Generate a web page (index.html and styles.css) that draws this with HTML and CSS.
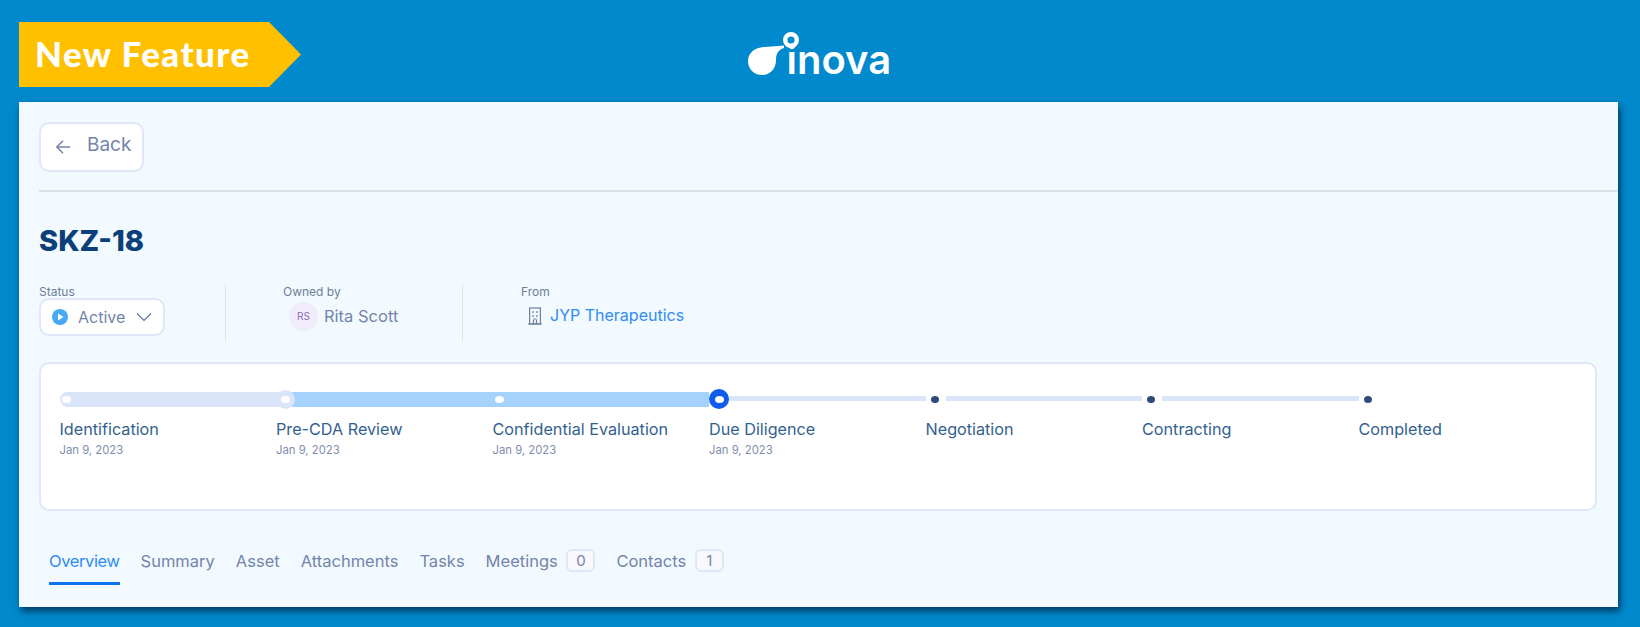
FILE: index.html
```html
<!DOCTYPE html>
<html lang="en">
<head>
    <meta charset="UTF-8">
    <title>New Feature - SKZ-18</title>
    <link rel="stylesheet" href="styles.css">
</head>
<body>
    <!-- Banner -->
    <div class="top">
        <div class="ribbon">New Feature</div>
        <div class="logo">
            <span class="logo-word">inova</span>
            <svg class="logo-mark" viewBox="0 0 55 48" width="55" height="48">
                <path d="M39 15.5 L20 17 C10 17 3 23 3 31 C3 39 9 45 17 45 C26 45 31 38 31 30 C31 24 33 20 39 18 Z" fill="#fff"/>
                <circle cx="46" cy="10" r="5.8" fill="#0089cc" stroke="#fff" stroke-width="4.4"/>
            </svg>
        </div>
    </div>

    <div class="panel">
        <!-- Back -->
        <div class="topbar">
            <button class="back">
                <svg viewBox="0 0 18 18" width="16" height="16" fill="none" stroke="#7385ab" stroke-width="1.7">
                    <path d="M17 9H2M9 2L2 9l7 7"/>
                </svg>
                <span>Back</span>
            </button>
        </div>

        <h1 class="title">SKZ-18</h1>

        <!-- Status, owner, company -->
        <div class="meta">
            <div class="meta-item status">
                <div class="meta-label">Status</div>
                <div class="select">
                    <svg viewBox="0 0 16 16" width="16" height="16">
                        <circle cx="8" cy="8" r="8" fill="#45a9f5"/>
                        <path d="M6 4.5v7l5.5-3.5z" fill="#fff"/>
                    </svg>
                    <span>Active</span>
                    <svg class="chevron" viewBox="0 0 16 10" width="16" height="10" fill="none" stroke="#5d6f96" stroke-width="1.1">
                        <path d="M1 1.5l7 7 7-7"/>
                    </svg>
                </div>
            </div>
            <div class="meta-item owner">
                <div class="meta-label">Owned by</div>
                <div class="meta-value">
                    <span class="avatar">RS</span>
                    <span>Rita Scott</span>
                </div>
            </div>
            <div class="meta-item from">
                <div class="meta-label">From</div>
                <div class="meta-value company">
                    <svg viewBox="0 0 14 18" width="14" height="18" fill="none" stroke="#6d7f9f" stroke-width="1.2">
                        <rect x="1.6" y="1" width="10.8" height="16"/>
                        <path d="M5 4v2M9 4v2M5 8v2M9 8v2M5 12h4M0 17h14"/>
                        <path d="M5.5 13v4M8.5 13v4"/>
                    </svg>
                    <a class="link">JYP Therapeutics</a>
                </div>
            </div>
        </div>

        <!-- Stage progress -->
        <div class="card">
            <div class="step">
                <div class="track passed first"><i class="dot"></i></div>
                <div class="step-name">Identification</div>
                <div class="step-date">Jan 9, 2023</div>
            </div>
            <div class="step">
                <div class="track done joined"><i class="halo"><i class="dot"></i></i></div>
                <div class="step-name">Pre-CDA Review</div>
                <div class="step-date">Jan 9, 2023</div>
            </div>
            <div class="step">
                <div class="track done inset"><i class="dot"></i></div>
                <div class="step-name">Confidential Evaluation</div>
                <div class="step-date">Jan 9, 2023</div>
            </div>
            <div class="step">
                <div class="track"><i class="current"><i class="dot"></i></i><b class="line"></b></div>
                <div class="step-name">Due Diligence</div>
                <div class="step-date">Jan 9, 2023</div>
            </div>
            <div class="step">
                <div class="track"><i class="todo"></i><b class="line"></b></div>
                <div class="step-name">Negotiation</div>
            </div>
            <div class="step">
                <div class="track"><i class="todo"></i><b class="line"></b></div>
                <div class="step-name">Contracting</div>
            </div>
            <div class="step">
                <div class="track"><i class="todo"></i></div>
                <div class="step-name">Completed</div>
            </div>
        </div>

        <!-- Tabs -->
        <div class="tabs">
            <div class="tab active">Overview</div>
            <div class="tab">Summary</div>
            <div class="tab">Asset</div>
            <div class="tab">Attachments</div>
            <div class="tab">Tasks</div>
            <div class="tab">Meetings <span class="count">0</span></div>
            <div class="tab">Contacts <span class="count">1</span></div>
        </div>
    </div>
</body>
</html>
```

FILE: styles.css
```css
/* Global Styles */
body {
    margin: 0;
    height: 627px;
    overflow: hidden;
    background: #0089cc;
    font-family: 'Inter', sans-serif;
    color: #33618f;
}

/* Banner */
.top {
    height: 102px;
    display: grid;
    grid-template-columns: 1fr auto 1fr;
    position: relative;
}

.ribbon {
    margin: 22px 0 0 19px;
    width: 282px;
    height: 65px;
    box-sizing: border-box;
    padding-left: 16px;
    background: #ffc000;
    clip-path: polygon(0 0, 250px 0, 100% 50%, 250px 100%, 0 100%);
    color: #fff;
    font-family: 'Lato', sans-serif;
    font-weight: 900;
    font-size: 35px;
    letter-spacing: 1.4px;
    line-height: 63px;
    white-space: nowrap;
}

.logo {
    position: relative;
    width: 143px;
    height: 102px;
    margin-left: 2px;
}

.logo-word {
    position: absolute;
    left: 37px;
    top: 36px;
    font-size: 40px;
    line-height: 48px;
    font-weight: 600;
    color: #fff;
}

.logo-mark {
    position: absolute;
    left: -4.5px;
    top: 30px;
}

/* Panel */
.panel {
    width: 1599px;
    height: 505px;
    margin-left: 19px;
    box-sizing: border-box;
    background: #f2f9ff;
    box-shadow: 2px 4px 7px rgba(0, 30, 60, 0.75);
}

.topbar {
    margin-left: 20px;
    padding: 20px 0 18px;
    border-bottom: 2px solid #dce2ea;
}

.back {
    width: 105px;
    height: 50px;
    display: flex;
    align-items: center;
    gap: 16px;
    padding: 0 0 5px 14px;
    background: #fff;
    border: 2px solid #dfe7f8;
    border-radius: 10px;
    color: #7385ab;
    font-family: inherit;
    font-size: 19px;
}

.back svg {
    margin-top: 5px;
}

.title {
    margin: 32px 0 0 20px;
    font-size: 29px;
    line-height: 34px;
    font-weight: 800;
    color: #0b3f7a;
}

/* Meta row */
.meta {
    display: flex;
    margin: 26px 0 0 20px;
    height: 57px;
}

.meta-item {
    box-sizing: border-box;
    border-right: 1px solid #dfe5ef;
}

.status {
    width: 187px;
}

.owner {
    width: 237px;
    padding-left: 57px;
}

.from {
    padding-left: 58px;
    border-right: none;
}

.meta-label {
    padding-top: 1px;
    font-size: 12px;
    line-height: 13px;
    color: #6f7d99;
}

.select {
    width: 126px;
    height: 38px;
    box-sizing: border-box;
    display: flex;
    align-items: center;
    gap: 10px;
    padding-left: 11px;
    background: #fff;
    border: 2px solid #dfe7f8;
    border-radius: 10px;
    font-size: 16px;
    color: #7385ab;
}

.chevron {
    margin-left: 1px;
}

.meta-value {
    display: flex;
    align-items: center;
    gap: 6px;
    margin: 3px 0 0 6px;
    height: 30px;
    font-size: 16.5px;
    color: #7385ab;
}

.avatar {
    width: 29px;
    height: 29px;
    border-radius: 50%;
    background: #f1ecfc;
    color: #8a6cb5;
    font-size: 10px;
    text-align: center;
    line-height: 29px;
}

.company {
    margin-left: 7px;
    gap: 8px;
    font-size: 16px;
}

.link {
    color: #2f8cf5;
    margin-top: -3px;
}

/* Stage progress */
.card {
    display: grid;
    grid-template-columns: repeat(7, 216.5px);
    width: 1558px;
    height: 149px;
    margin: 21px 0 0 20px;
    box-sizing: border-box;
    padding: 23px 0 0 18.5px;
    background: #fff;
    border: 2px solid #dfe7f8;
    border-radius: 10px;
}

.track {
    display: flex;
    align-items: center;
    height: 24px;
    position: relative;
}

.track.passed,
.track.done {
    height: 15px;
    margin: 5px 0 4px;
}

.track.passed {
    background: #dae5fa;
}

.track.first {
    border-radius: 8px 0 0 8px;
    padding-left: 2px;
}

.track.done {
    background: #a5d2fd;
}

.track.joined {
    background: linear-gradient(90deg, #dae5fa 10px, #a5d2fd 10px);
}

.track.inset {
    padding-left: 2px;
}

.dot {
    display: block;
    width: 9px;
    height: 7px;
    border-radius: 50%;
    background: #fff;
}

.halo {
    display: flex;
    align-items: center;
    justify-content: center;
    width: 19px;
    height: 19px;
    border-radius: 50%;
    background: #dae5fa;
    flex: none;
}

.current {
    display: flex;
    align-items: center;
    justify-content: center;
    width: 20px;
    height: 20px;
    border-radius: 50%;
    background: #0f5cec;
    flex: none;
}

.todo {
    display: block;
    width: 8px;
    height: 7px;
    margin-left: 5px;
    border-radius: 50%;
    background: #2e4a7e;
    flex: none;
}

.line {
    display: block;
    height: 5px;
    background: #dae5fa;
    flex: 1;
    margin-top: -1px;
}

.step:nth-child(n+5) .line {
    margin-left: 7px;
}

.step-name {
    padding-top: 8px;
    font-size: 16.2px;
    line-height: 20px;
    color: #33618f;
}

.step-date {
    margin-top: 4px;
    font-size: 11.3px;
    line-height: 14px;
    color: #7f8db0;
}

/* Tabs */
.tabs {
    display: flex;
    gap: 21px;
    margin: 27px 0 0 30px;
    font-size: 16.5px;
    color: #7385ab;
}

.tab {
    height: 47px;
    box-sizing: border-box;
    padding-top: 11px;
    line-height: 24px;
    white-space: nowrap;
}

.tab.active {
    color: #2f8cf5;
    letter-spacing: -0.4px;
    border-bottom: 3px solid #0f74ee;
}

.count {
    display: inline-block;
    box-sizing: border-box;
    min-width: 29px;
    height: 23px;
    margin-left: 4px;
    font-size: 15px;
    text-align: center;
    line-height: 19px;
    letter-spacing: 0;
    background: #f7f9ff;
    border: 2px solid #dfe7f8;
    border-radius: 6px;
    vertical-align: top;
}
```
